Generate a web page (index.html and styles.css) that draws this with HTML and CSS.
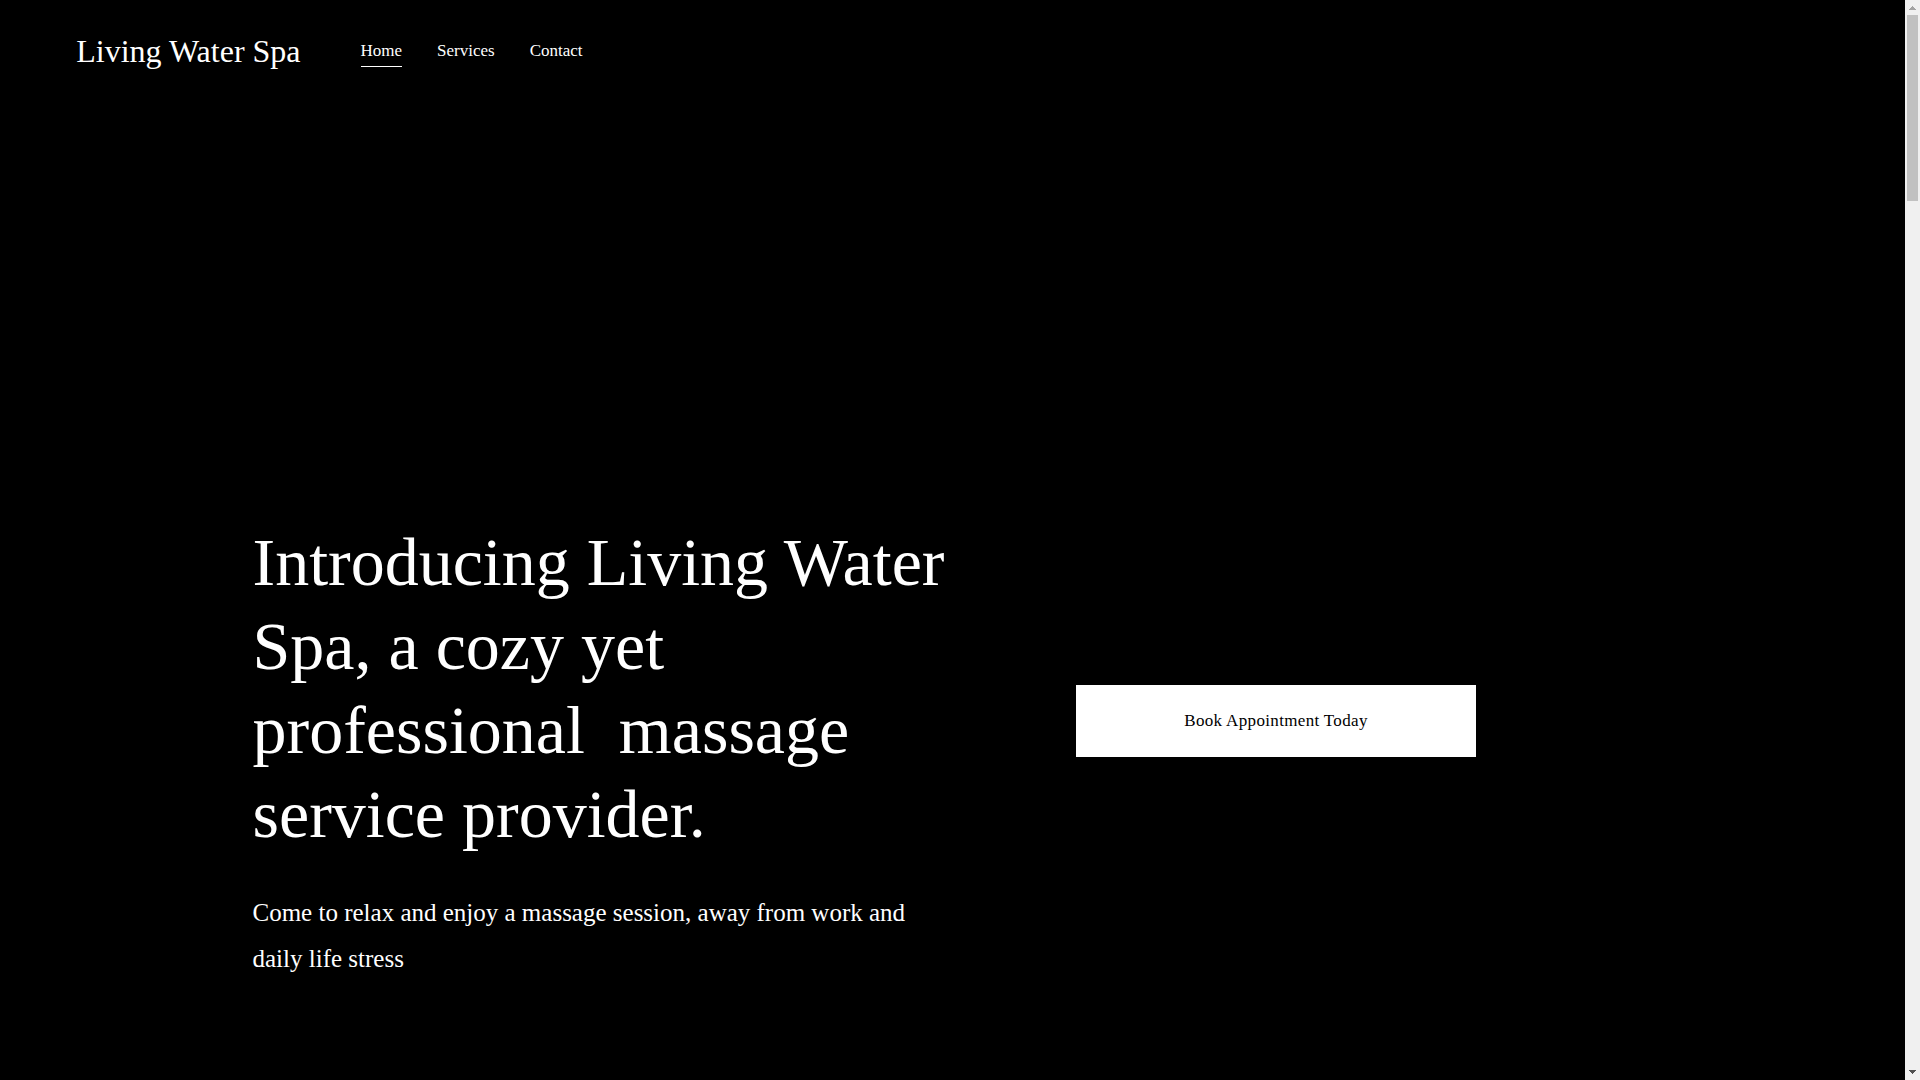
FILE: index.html
```html
<!DOCTYPE html>
<html lang="en">
<head>
<meta charset="utf-8">
<title>Living Water Spa</title>
<link rel="stylesheet" href="styles.css">
</head>
<body>
<div class="page">
  <header class="site-header">
    <a class="brand" href="#">Living Water Spa</a>
    <nav class="nav">
      <a class="nav-link nav-link-active" href="#">Home</a>
      <a class="nav-link" href="#">Services</a>
      <a class="nav-link" href="#">Contact</a>
    </nav>
  </header>
  <main class="hero">
    <div class="hero-text">
      <h1 class="hero-title">Introducing Living Water Spa, a cozy yet professional&nbsp; massage service provider.</h1>
      <p class="hero-lead">Come to relax and enjoy a massage session, away from work and daily life stress</p>
    </div>
    <div class="hero-action">
      <button class="book-button" type="button">Book Appointment Today</button>
    </div>
  </main>
</div>
<div class="scrollbar" aria-hidden="true">
  <svg class="arrow arrow-up" width="15" height="15" viewBox="0 0 15 15" shape-rendering="crispEdges"><path d="M7 6h1v1h1v1h1v1h1v1H4V9h1V8h1V7h1z"/></svg>
  <div class="track"><div class="thumb"></div></div>
  <svg class="arrow arrow-down" width="15" height="15" viewBox="0 0 15 15" shape-rendering="crispEdges"><path d="M4 5h7v1h-1v1H9v1H8v1H7V8H6V7H5V6H4z"/></svg>
</div>
</body>
</html>
```
FILE: styles.css
```css
* {
  box-sizing: border-box;
}

body {
  display: flex;
  min-height: 100vh;
  margin: 0;
  background: #000;
  color: #fff;
  font-family: "Liberation Serif", serif;
}

.page {
  display: flex;
  flex: 1;
  flex-direction: column;
}

.site-header {
  display: flex;
  align-items: center;
  gap: 60px;
  padding: 24px 4%;
}

.brand {
  color: inherit;
  font-size: 32px;
  line-height: 54px;
  text-decoration: none;
}

.nav {
  display: flex;
  gap: 35px;
}

.nav-link {
  border-bottom: 1px solid transparent;
  color: inherit;
  font-size: 17px;
  line-height: 30px;
  text-decoration: none;
}

.nav-link-active {
  border-color: #fff;
}

.hero {
  display: grid;
  flex: 1;
  grid-template-columns: 1fr 1fr;
  align-content: end;
  gap: 122px;
  width: 100%;
  max-width: 1650px;
  padding: 0 0 98px 125px;
  margin: 0 auto;
}

.hero-title {
  margin: 0 0 34px;
  font-size: 68px;
  font-weight: 400;
  line-height: 84px;
}

.hero-lead {
  margin: 0;
  font-size: 25px;
  line-height: 46px;
}

.hero-action {
  display: flex;
  align-items: center;
  padding-bottom: 60px;
}

.book-button {
  width: 400px;
  padding: 24px;
  border: 0;
  background: #fff;
  color: #000;
  font: 17px/24px "Liberation Serif", serif;
  letter-spacing: 0.02em;
}

.scrollbar {
  display: flex;
  flex-direction: column;
  width: 15px;
  background: #f0f0f0;
}

.track {
  flex: 1;
  padding: 0 2px;
}

.thumb {
  height: 186px;
  background: #c1c1c1;
}

.arrow {
  display: block;
}

.arrow-up {
  fill: #a3a3a3;
}

.arrow-down {
  fill: #505050;
}
```
